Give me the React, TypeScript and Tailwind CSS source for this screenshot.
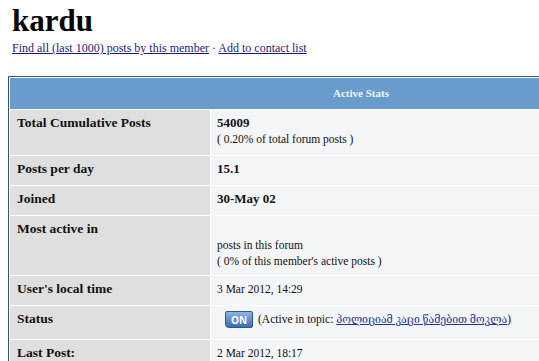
interface StatRow {
  label: string;
  height: string;
  children: React.ReactNode;
}

function Row({ label, height, children }: StatRow) {
  return (
    <tr className={height}>
      <td className="w-[200px] bg-[#dfdfdf] align-top pl-[7px] pt-[5px] text-[13.5px] font-bold leading-[16px] text-[#111]">
        {label}
      </td>
      <td className="bg-[#f4f5f6] align-top pl-[6px] pt-[5px] text-[11.5px] leading-[16px] text-[#111]">
        {children}
      </td>
    </tr>
  );
}

export default function App() {
  return (
    <div className="w-[539px] h-[361px] overflow-hidden bg-white font-[family-name:Liberation_Serif,DejaVu_Serif,serif]">
      <div className="pl-[12px] pt-[2px]">
        <h1 className="text-[31px] font-bold leading-[37px] text-black">kardu</h1>
        <div className="mt-[2px] text-[12px] leading-[14px] text-[#222]">
          <a href="#" className="text-[#1c1c78] underline">Find all (last 1000) posts by this member</a>
          {' · '}
          <a href="#" className="text-[#1c1c78] underline">Add to contact list</a>
        </div>
      </div>

      <table className="ml-[8px] mt-[21px] w-[706px] border border-[#34537a] border-separate border-spacing-[1px] bg-white">
        <tbody>
          <tr className="h-[31px]">
            <th colSpan={2} className="bg-[#6a9bcd] text-center text-[11px] font-bold text-[#f2f6fb]">
              Active Stats
            </th>
          </tr>
          <Row label="Total Cumulative Posts" height="h-[45px]">
            <div className="text-[13px] font-bold">54009</div>
            <div>( 0.20% of total forum posts )</div>
          </Row>
          <Row label="Posts per day" height="h-[29px]">
            <div className="text-[13px] font-bold">15.1</div>
          </Row>
          <Row label="Joined" height="h-[29px]">
            <div className="text-[13px] font-bold">30-May 02</div>
          </Row>
          <Row label="Most active in" height="h-[59px]">
            <div className="h-[16px]"></div>
            <div>posts in this forum</div>
            <div>( 0% of this member's active posts )</div>
          </Row>
          <Row label="User's local time" height="h-[29px]">
            <div>3 Mar 2012, 14:29</div>
          </Row>
          <Row label="Status" height="h-[33px]">
            <div className="flex items-center">
              <span className="ml-[8px] mr-[5px] flex h-[17px] w-[28px] items-center justify-center rounded-[2px] rounded-bl-[4px] border border-[#2c5894] bg-gradient-to-b from-[#8db4e4] to-[#3a6db3] font-sans text-[10px] font-bold text-white">
                ON
              </span>
              <span>
                (Active in topic:{' '}
                <a href="#" className="text-[10.5px] text-[#26339a] underline">პოლიციამ კაცი წამებით მოკლა</a>)
              </span>
            </div>
          </Row>
          <Row label="Last Post:" height="h-[29px]">
            <div>2 Mar 2012, 18:17</div>
          </Row>
        </tbody>
      </table>
    </div>
  );
}
